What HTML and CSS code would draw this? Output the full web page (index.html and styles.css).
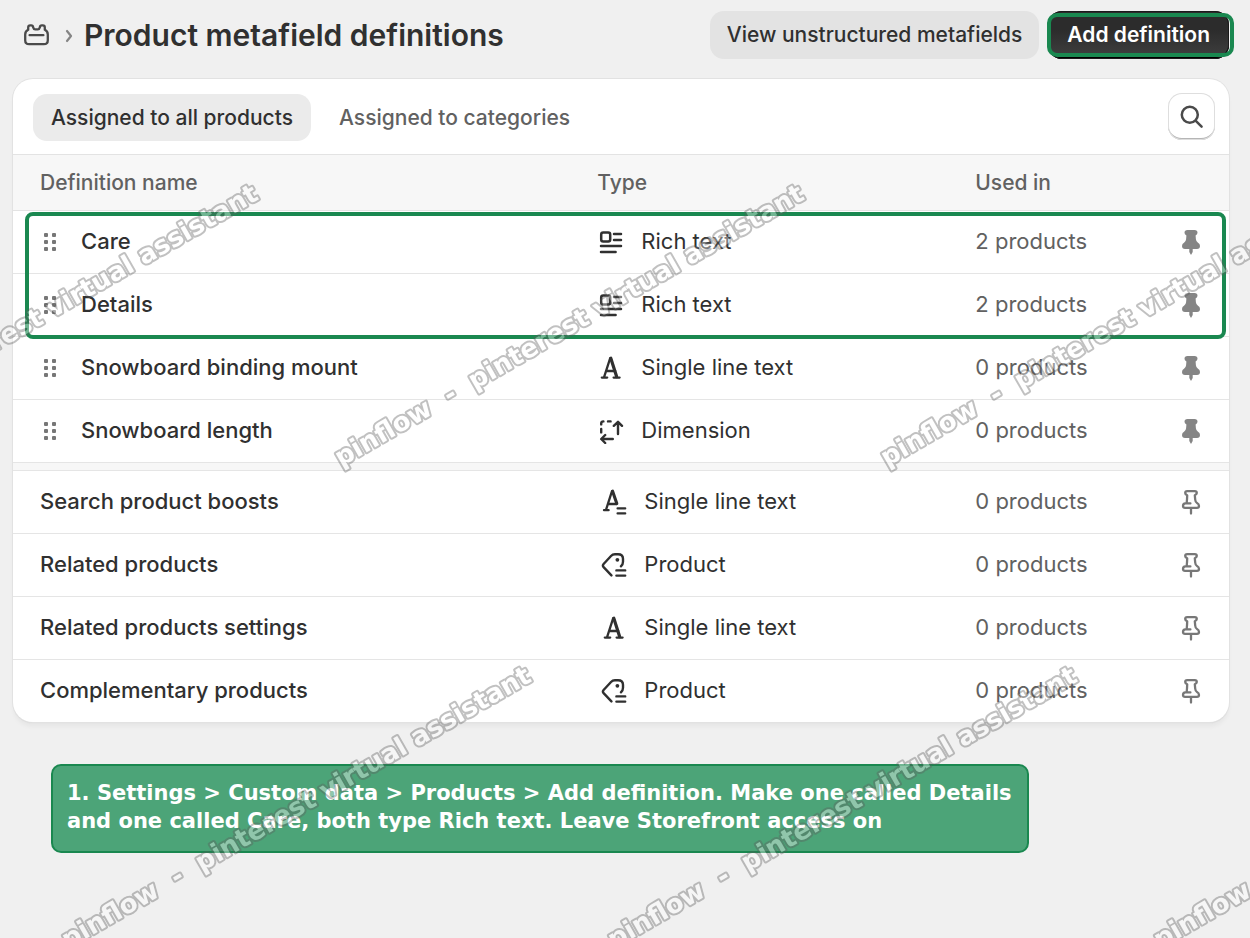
FILE: index.html
```html
<!DOCTYPE html>
<html lang="en">
<head>
<meta charset="utf-8">
<title>Product metafield definitions</title>
<link rel="stylesheet" href="styles.css">
</head>
<body>
<svg class="sprite" aria-hidden="true">
  <symbol id="drag" viewBox="0 0 20 24">
    <g fill="#777"><rect x="4" y="3" width="4" height="4" rx="1"/><rect x="12" y="3" width="4" height="4" rx="1"/><rect x="4" y="10" width="4" height="4" rx="1"/><rect x="12" y="10" width="4" height="4" rx="1"/><rect x="4" y="17" width="4" height="4" rx="1"/><rect x="12" y="17" width="4" height="4" rx="1"/></g>
  </symbol>
  <symbol id="rich" viewBox="0 0 26 26">
    <g fill="none" stroke="#303030" stroke-width="2.5" stroke-linecap="round"><rect x="3.2" y="3.4" width="9" height="9" rx="2"/><path d="M16 5h7M16 11h7M3 17h20M3 23h14.6"/></g>
  </symbol>
  <symbol id="letter" viewBox="0 0 26 26">
    <g fill="none" stroke="#303030" stroke-width="2.3" stroke-linecap="round" stroke-linejoin="round"><path d="M6 22.4L12.2 3.2M8.2 16h9M3.8 22.6h5.4M15.6 22.6h6"/><path stroke-width="3.2" d="M12.8 3.2L18.6 21.6"/></g>
  </symbol>
  <symbol id="letter-list" viewBox="0 0 26 26">
    <g fill="none" stroke="#303030" stroke-width="2.3" stroke-linecap="round" stroke-linejoin="round"><path d="M5 20.8L11 2.2M7.2 15h8.4M3 21.2h4.6M16.6 19.4h7.6M16.6 24.4h7.6"/><path stroke-width="3.1" d="M11.6 2.2L15.8 14.6"/></g>
  </symbol>
  <symbol id="dimension" viewBox="0 0 26 26">
    <g fill="none" stroke="#303030" stroke-width="2.4" stroke-linecap="round" stroke-linejoin="round"><path d="M3.2 6.4V5.4Q3.2 3.4 5.4 3.4M10 3.4h2.6M3.2 11v3.4M20 16V4M15.8 7.8l4.2-4 4 4M14.8 21H3.6M7.2 17l-4 4 4 4"/></g>
  </symbol>
  <symbol id="tag" viewBox="0 0 26 26">
    <g fill="none" stroke="#303030" stroke-width="2.4" stroke-linecap="round" stroke-linejoin="round"><path d="M10.4 23.4L2.6 15.2Q1.2 13.6 2.6 12L10 4Q11.6 2.2 14 2.2H17Q22 2.2 22 6.8V9.8Q22 12.6 20 14.2M15.4 18.4h8.8M15.4 23.6h8.8"/></g><circle cx="16.4" cy="7.8" r="1.9" fill="#303030"/>
  </symbol>
  <symbol id="pin-solid" viewBox="0 0 18 25">
    <path fill="#858585" d="M5.5 0H12.5Q15.5 0 15.5 2.8 15.5 4.6 13.6 5.4L13.9 9.3Q14.2 12 16 12.8 18 13.7 18 16 18 19 15 19H10.7V22L9 25 7.3 22V19H3Q0 19 0 16 0 13.7 2 12.8 3.8 12 4.1 9.3L4.4 5.4Q2.5 4.6 2.5 2.8 2.5 0 5.5 0Z"/>
  </symbol>
  <symbol id="pin" viewBox="0 0 18 25">
    <path fill="none" stroke="#777" stroke-width="2.3" stroke-linecap="round" stroke-linejoin="round" d="M5.2 1.2H12.8Q14.8 1.2 14.8 3 14.8 4.3 12.8 5.2L13.2 9.5Q13.4 12.2 15 13 17 14 17 16 17 17.9 15 17.9H3Q1 17.9 1 16 1 13.6 3.4 13.4H8.4M4.8 12Q4.8 11.4 5 9.5L5.2 5.2Q3.2 4.4 3.2 3 3.2 1.2 5.2 1.2M9 18v5.6"/>
  </symbol>
</svg>

<header class="header">
  <svg class="store-icon" viewBox="0 0 26 22" fill="none" stroke="#4a4a4a" stroke-width="2.3" stroke-linecap="round" stroke-linejoin="round" aria-hidden="true"><path d="M4.2 5.8V3.4Q4.2 1.4 6.2 1.4H7.2Q9 1.4 9.2 3.6 9.6 5.4 11.2 5.4H13.8Q15.4 5.4 15.8 3.6 16 1.4 17.8 1.4H18.8Q20.8 1.4 20.8 3.4V5.8Q23.8 7.2 23.8 10.4V16.2Q23.8 20.2 19.8 20.2H5.2Q1.2 20.2 1.2 16.2V10.4Q1.2 7.2 4.2 5.8ZM5.6 11.2H19.4"/></svg>
  <svg class="chevron" viewBox="0 0 8 14" fill="none" stroke="#858585" stroke-width="2.2" stroke-linecap="round" stroke-linejoin="round" aria-hidden="true"><path d="M2 2l4 5-4 5"/></svg>
  <h1 class="title">Product metafield definitions</h1>
  <div class="actions">
    <button class="button" type="button">View unstructured metafields</button>
    <span class="marked"><button class="button primary" type="button">Add definition</button></span>
  </div>
</header>

<main>
  <section class="card">
    <div class="toolbar">
      <button class="tab active" type="button">Assigned to all products</button>
      <button class="tab" type="button">Assigned to categories</button>
      <button class="search" type="button" aria-label="Search"><svg viewBox="0 0 24 24" fill="none" stroke="#4a4a4a" stroke-width="2.5" stroke-linecap="round" aria-hidden="true"><circle cx="9.8" cy="9.8" r="8"/><path d="M15.8 15.8l5.8 5.8"/></svg></button>
    </div>
    <table class="definitions">
      <colgroup><col class="col-name"><col class="col-type"><col class="col-used"><col class="col-pin"></colgroup>
      <thead><tr><th>Definition name</th><th>Type</th><th>Used in</th><th></th></tr></thead>
      <tbody class="pinned">
        <tr><td><div class="name"><svg class="drag"><use href="#drag"/></svg><span>Care</span></div></td><td><div class="type"><svg><use href="#rich"/></svg><span>Rich text</span></div></td><td class="used">2 products</td><td><button class="pin" type="button" aria-label="Unpin Care"><svg><use href="#pin-solid"/></svg></button></td></tr>
        <tr><td><div class="name"><svg class="drag"><use href="#drag"/></svg><span>Details</span></div></td><td><div class="type"><svg><use href="#rich"/></svg><span>Rich text</span></div></td><td class="used">2 products</td><td><button class="pin" type="button" aria-label="Unpin Details"><svg><use href="#pin-solid"/></svg></button></td></tr>
        <tr><td><div class="name"><svg class="drag"><use href="#drag"/></svg><span>Snowboard binding mount</span></div></td><td><div class="type"><svg><use href="#letter"/></svg><span>Single line text</span></div></td><td class="used">0 products</td><td><button class="pin" type="button" aria-label="Unpin Snowboard binding mount"><svg><use href="#pin-solid"/></svg></button></td></tr>
        <tr><td><div class="name"><svg class="drag"><use href="#drag"/></svg><span>Snowboard length</span></div></td><td><div class="type"><svg><use href="#dimension"/></svg><span>Dimension</span></div></td><td class="used">0 products</td><td><button class="pin" type="button" aria-label="Unpin Snowboard length"><svg><use href="#pin-solid"/></svg></button></td></tr>
        <tr class="divider"><td colspan="4"></td></tr>
      </tbody>
      <tbody class="unpinned">
        <tr><td><div class="name"><span>Search product boosts</span></div></td><td><div class="type"><svg><use href="#letter-list"/></svg><span>Single line text</span></div></td><td class="used">0 products</td><td><button class="pin" type="button" aria-label="Pin Search product boosts"><svg><use href="#pin"/></svg></button></td></tr>
        <tr><td><div class="name"><span>Related products</span></div></td><td><div class="type"><svg><use href="#tag"/></svg><span>Product</span></div></td><td class="used">0 products</td><td><button class="pin" type="button" aria-label="Pin Related products"><svg><use href="#pin"/></svg></button></td></tr>
        <tr><td><div class="name"><span>Related products settings</span></div></td><td><div class="type"><svg><use href="#letter"/></svg><span>Single line text</span></div></td><td class="used">0 products</td><td><button class="pin" type="button" aria-label="Pin Related products settings"><svg><use href="#pin"/></svg></button></td></tr>
        <tr><td><div class="name"><span>Complementary products</span></div></td><td><div class="type"><svg><use href="#tag"/></svg><span>Product</span></div></td><td class="used">0 products</td><td><button class="pin" type="button" aria-label="Pin Complementary products"><svg><use href="#pin"/></svg></button></td></tr>
      </tbody>
    </table>
    <div class="row-marker"></div>
  </section>
  <p class="callout">1. Settings &gt; Custom data &gt; Products &gt; Add definition. Make one called Details<br>and one called Care, both type Rich text. Leave Storefront access on</p>
</main>

<svg class="watermark" aria-hidden="true">
  <text transform="translate(-205 467) rotate(-30)">pinflow  -  pinterest virtual assistant</text>
  <text transform="translate(341 467) rotate(-30)">pinflow  -  pinterest virtual assistant</text>
  <text transform="translate(887 467) rotate(-30)">pinflow  -  pinterest virtual assistant</text>
  <text transform="translate(68 949) rotate(-30)">pinflow  -  pinterest virtual assistant</text>
  <text transform="translate(614 949) rotate(-30)">pinflow  -  pinterest virtual assistant</text>
  <text transform="translate(1160 949) rotate(-30)">pinflow  -  pinterest virtual assistant</text>
</svg>
</body>
</html>
```
FILE: styles.css
```css
* { box-sizing: border-box; }
body {
  margin: 0;
  padding: 11px 21px 0 13px;
  min-height: 100vh;
  background: #f0f0f0;
  color: #303030;
  font: 500 22px/28px Inter, sans-serif;
}
button { font: inherit; color: inherit; border: 0; padding: 0; cursor: pointer; }
.sprite { position: absolute; width: 0; height: 0; }

.header { display: flex; align-items: center; height: 48px; padding-left: 11px; margin-bottom: 20px; }
.store-icon { width: 26px; height: 22px; }
.chevron { width: 8px; height: 14px; margin: 2px 11px 0 15px; }
.title { margin: 0; font-size: 30px; line-height: 40px; font-weight: 600; white-space: nowrap; }
.actions { display: flex; gap: 9px; margin-left: auto; }
.button { height: 48px; padding: 0 17px; border-radius: 14px; background: #e3e3e3; font-size: 21px; white-space: nowrap; }
.primary {
  padding: 0 19px;
  background: linear-gradient(#2c2c2c 40%, #404040);
  color: #fff;
  font-weight: 600;
  box-shadow: inset 0 0 0 1px #1a1a1a, inset 0 -2px 0 #000;
}
.marked { position: relative; }
.marked::after {
  content: "";
  position: absolute;
  inset: 2px -5px 2px -1px;
  border: 4px solid #1a8850;
  border-radius: 10px;
  pointer-events: none;
}

.card {
  position: relative;
  background: #fff;
  border-radius: 20px;
  box-shadow: 0 0 0 1px #e2e2e2, 0 1px 1px #cfcfcf, 0 5px 4px rgba(0, 0, 0, .04);
}
.toolbar { display: flex; align-items: center; gap: 10px; height: 75px; padding: 0 14px 0 20px; }
.tab { height: 47px; margin-top: 2px; padding: 0 18px; border-radius: 14px; background: none; color: #616161; font-size: 21px; white-space: nowrap; }
.tab.active { background: #ebebeb; color: #303030; }
.search {
  display: grid;
  place-items: center;
  width: 47px;
  height: 47px;
  margin-left: auto;
  border-radius: 14px;
  background: #fff;
  box-shadow: inset 0 0 0 1px #dedede, inset 0 -2px 0 #b5b5b5;
}
.search svg { width: 24px; height: 24px; }

.definitions { width: 100%; table-layout: fixed; border-spacing: 0; }
.col-name { width: 46%; }
.col-type { width: 31%; }
.col-used { width: 17%; }
.definitions th {
  height: 57px;
  padding: 0 0 0 27px;
  border: solid #e3e3e3;
  border-width: 1px 0;
  background: #f7f7f7;
  color: #616161;
  font-size: 21px;
  font-weight: 500;
  text-align: left;
}
.definitions td { height: 63px; padding: 0 0 0 27px; border-bottom: 1px solid #e5e5e5; }
.definitions th:nth-child(2) { padding-left: 25px; }
.definitions td:nth-child(2) { padding-left: 26px; }
.definitions td:nth-child(3), .definitions th:nth-child(3) { padding-left: 26px; }
.definitions td:nth-child(4) { padding: 0 28px 0 0; }
.definitions .used { padding-bottom: 2px; }
.definitions .divider td { height: 8px; padding: 0; background: #f7f7f7; }
.unpinned tr:last-child td { height: 62px; border-bottom: 0; }
.name, .type { display: flex; align-items: center; }
.name span, .type span { padding-bottom: 2px; }
.drag { width: 20px; height: 24px; margin-right: 21px; }
.type { font-weight: 400; gap: 17px; }
.type svg { width: 26px; height: 26px; }
.unpinned .type { padding-left: 3px; }
.used { color: #616161; font-weight: 400; }
.pin { display: block; margin-left: auto; background: none; width: 20px; height: 25px; }
.pin svg { display: block; width: 20px; height: 25px; }

.row-marker {
  position: absolute;
  top: 133px;
  left: 12px;
  right: 3px;
  height: 127px;
  border: 4px solid #1a8850;
  border-radius: 8px;
  pointer-events: none;
}
.callout {
  width: fit-content;
  margin: 42px 0 0 38px;
  padding: 13px 15px 16px 14px;
  border: 2px solid #1a8850;
  border-radius: 10px;
  background: #4ca478;
  color: #fff;
  font: bold 21px/28px "DejaVu Sans", sans-serif;
}
.watermark { position: fixed; inset: 0; width: 100%; height: 100%; pointer-events: none; opacity: .38; }
.watermark text {
  font: bold 26px "DejaVu Sans", sans-serif;
  white-space: pre;
  fill: #fff;
  stroke: #5c5c5c;
  stroke-width: 4px;
  stroke-linejoin: round;
  paint-order: stroke;
}
```
